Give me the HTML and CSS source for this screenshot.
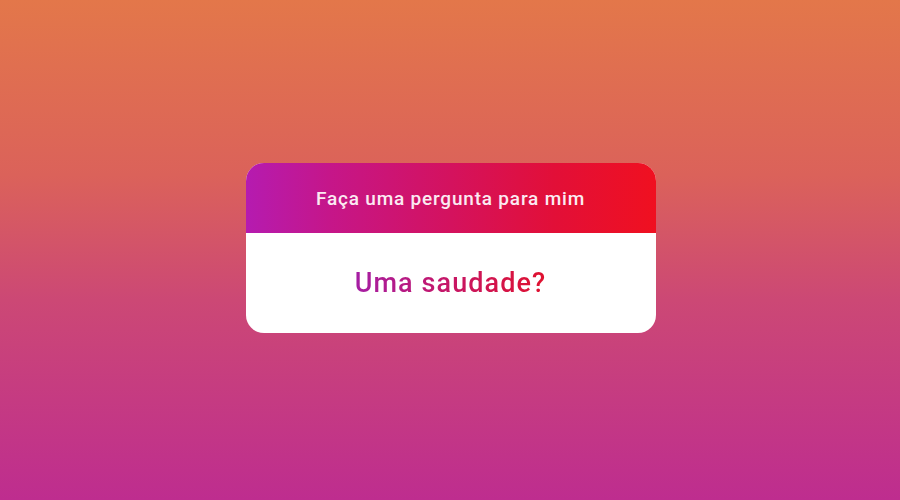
FILE: index.html
```html
<!DOCTYPE html>
<html lang="pt">
<head>
    <meta charset="UTF-8">
    <meta name="viewport" content="width=device-width, initial-scale=1.0">
    <title>Caixa de perguntas</title>
    <link rel="stylesheet" href="styles.css">
</head>
<body>
    <div class="story">
        <div class="question-box">
            <div class="question-title">Faça uma pergunta para mim</div>
            <div class="question-answer">
                <span class="answer-text">Uma saudade?</span>
            </div>
        </div>
    </div>
</body>
</html>
```

FILE: styles.css
```css
html, body {
    margin: 0;
    padding: 0;
    height: 100%;
}
body {
    font-family: Roboto, "Noto Sans", Arial, sans-serif;
}
.story {
    height: 500px;
    display: flex;
    align-items: center;
    justify-content: center;
    background: linear-gradient(180deg, #e3774a 0%, #db625a 35%, #cc4875 60%, #be2d8f 100%);
}
.question-box {
    width: 410px;
    margin-left: 1px;
    margin-top: -4px;
    border-radius: 18px;
    overflow: hidden;
    background: white;
}
.question-title {
    height: 70px;
    display: flex;
    align-items: center;
    justify-content: center;
    color: #fbeaf2;
    font-size: 19px;
    font-weight: 500;
    letter-spacing: 0.8px;
    background: linear-gradient(90deg, #b51bb0 0%, #c5168a 20%, #d4125e 50%, #e20f38 75%, #f01020 100%);
}
.question-answer {
    height: 100px;
    display: flex;
    align-items: center;
    justify-content: center;
}
.answer-text {
    font-size: 27px;
    font-weight: 500;
    letter-spacing: 1.1px;
    background: linear-gradient(90deg, #a51ea4 0%, #c4176b 45%, #e0112e 100%);
    -webkit-background-clip: text;
    background-clip: text;
    color: transparent;
}
```
